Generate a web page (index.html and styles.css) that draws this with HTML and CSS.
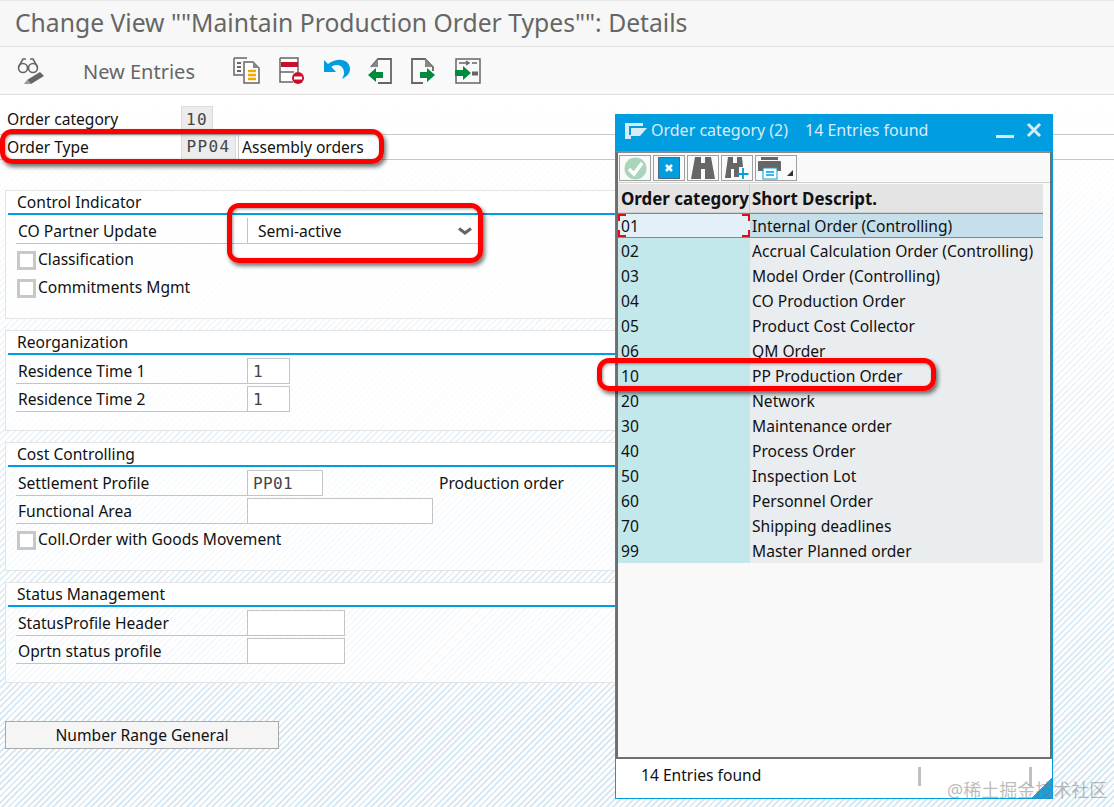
FILE: index.html
```html
<!DOCTYPE html>
<html lang="en">
<head>
<meta charset="utf-8">
<title>Change View</title>
<link rel="stylesheet" href="styles.css">
</head>
<body>
<div class="app">
  <header class="titlebar">Change View ""Maintain Production Order Types"": Details</header>
  <nav class="toolbar">
    <svg class="ic ic-glasses" width="28" height="30" viewBox="0 0 28 30"><g fill="none" stroke="#666" stroke-width="1.600"><circle cx="6" cy="12" r="4.500"/><circle cx="16" cy="12" r="4.500"/><path d="M10.500 11h1M1.500 11L6 3h3M20.500 11L16 3h-3"/></g><path d="M10 24l13-8 4 4-13 8z" fill="#666"/><path d="M7 28l3-4 4 4z" fill="#999"/></svg>
    <span class="tool-text">New Entries</span>
    <svg class="ic ic-copy" width="27" height="27" viewBox="0 0 27 27"><path d="M1 1h13M1 1v17h9" fill="none" stroke="#666" stroke-width="1.500"/><path d="M4 6h4M4 10h4M4 14h4" stroke="#666" stroke-width="2"/><path d="M11 5h9l6 6v15H11z" fill="#fff" stroke="#666" stroke-width="1.500"/><path d="M20 5v6h6" fill="#888"/><path d="M15 14h8M15 18h8M15 22h8" stroke="#f0ab00" stroke-width="2.500"/></svg>
    <svg class="ic ic-del" width="26" height="27" viewBox="0 0 26 27"><path d="M1 1h18v14M1 1v24h13" fill="#fff" stroke="#666" stroke-width="1.500"/><rect x="2" y="5" width="17" height="5" fill="#c8102e"/><path d="M1 15h14" stroke="#666" stroke-width="1.500"/><circle cx="19" cy="21" r="6" fill="#c8102e"/><rect x="15" y="19.500" width="8" height="3" fill="#fff"/></svg>
    <svg class="ic ic-undo" width="27" height="24" viewBox="0 0 27 24"><path d="M1 3v12h12l-4.500-5C13 6 21 8 21 16c0 2-1 4-2 6 4-2 8-5 8-10C27 3 16-1 5 7z" fill="#009de0"/></svg>
    <svg class="ic ic-prev" width="25" height="27" viewBox="0 0 25 27"><path d="M3 10l7-8h13v24H10" fill="none" stroke="#666" stroke-width="1.800"/><path d="M10 2v8H3" fill="#888"/><path d="M0 18l8-7v4h7v6H8v4z" fill="#008a3e"/></svg>
    <svg class="ic ic-next" width="25" height="27" viewBox="0 0 25 27"><path d="M12 26H1V2h13l8 8v4" fill="none" stroke="#666" stroke-width="1.800"/><path d="M14 2v8h8" fill="#888"/><path d="M9 15h7v-4l8 7-8 7v-4H9z" fill="#008a3e"/></svg>
    <svg class="ic ic-last" width="26" height="26" viewBox="0 0 26 26"><path d="M1 1h24v24H1z" fill="none" stroke="#666" stroke-width="1.500"/><path d="M4 5h10M11 3l3 2-3 2M17 5h5M17 16h5" stroke="#666" stroke-width="1.500" fill="none"/><rect x="17" y="13.500" width="6" height="4" fill="#666"/><path d="M0 12h8V8l8 7-8 7v-4H0z" fill="#008a3e"/></svg>
  </nav>
  <main class="content">
    <div class="head-fields">
      <div class="head-row">
        <span class="head-label">Order category</span>
        <span class="ro-field mono w-cat">10</span>
      </div>
      <div class="head-row lined">
        <span class="head-label">Order Type</span>
        <span class="ro-field mono w-type">PP04</span>
        <span class="head-desc">Assembly orders</span>
      </div>
    </div>

    <section class="group g1">
      <h2 class="group-title">Control Indicator</h2>
      <div class="row"><span class="label">CO Partner Update</span><span class="field select">Semi-active<svg class="chev" width="14" height="9" viewBox="0 0 14 9"><path d="M1 1.500l6 4.500 6-4.500" fill="none" stroke="#666" stroke-width="3"/></svg></span></div>
      <div class="row"><span class="check"></span><span class="check-text">Classification</span></div>
      <div class="row"><span class="check"></span><span class="check-text">Commitments Mgmt</span></div>
    </section>

    <section class="group g2">
      <h2 class="group-title">Reorganization</h2>
      <div class="row"><span class="label">Residence Time 1</span><span class="field mono w-43">1</span></div>
      <div class="row"><span class="label">Residence Time 2</span><span class="field mono w-43">1</span></div>
    </section>

    <section class="group g3">
      <h2 class="group-title">Cost Controlling</h2>
      <div class="row"><span class="label">Settlement Profile</span><span class="field mono w-76">PP01</span><span class="after">Production order</span></div>
      <div class="row"><span class="label">Functional Area</span><span class="field w-186"></span></div>
      <div class="row"><span class="check"></span><span class="check-text">Coll.Order with Goods Movement</span></div>
    </section>

    <section class="group g4">
      <h2 class="group-title">Status Management</h2>
      <div class="row"><span class="label">StatusProfile Header</span><span class="field w-98"></span></div>
      <div class="row"><span class="label">Oprtn status profile</span><span class="field w-98"></span></div>
    </section>

    <button class="action">Number Range General</button>
  </main>
</div>

<aside class="dialog">
  <div class="dlg-title">
    <svg class="dlg-icon" width="22" height="16" viewBox="0 0 22 16"><path d="M0 0h18v3H4v9h2V5h16l-7 8H6v3H0z" fill="#d8ecf8"/></svg>
    <span class="dlg-name">Order category (2)</span>
    <span class="dlg-count">14 Entries found</span>
    <svg class="dlg-min" width="18" height="4" viewBox="0 0 18 4"><rect width="18" height="3" y="1" fill="#d8ecf8"/></svg>
    <svg class="dlg-close" width="16" height="16" viewBox="0 0 16 16"><path d="M2 2l12 12M14 2L2 14" stroke="#d8ecf8" stroke-width="3"/></svg>
  </div>
  <div class="dlg-body">
    <div class="dlg-tools">
      <span class="tbtn"><svg width="25" height="25" viewBox="0 0 25 25"><circle cx="12.500" cy="12.500" r="11" fill="#a9d6bb"/><path d="M6 13l5 5 8-11" fill="none" stroke="#fff" stroke-width="3.500"/></svg></span>
      <span class="tbtn"><svg width="22" height="22" viewBox="0 0 22 22"><rect width="21" height="21" x=".5" y=".5" fill="#009de0" stroke="#4d6b80"/><path d="M8 8l6 6M14 8l-6 6" stroke="#fff" stroke-width="2.500"/></svg></span>
      <span class="tbtn"><svg width="24" height="24" viewBox="0 0 24 24"><path d="M4 1h6v6h4V1h6l4 22h-10V13h-4v10H0z" fill="#666"/></svg></span>
      <span class="tbtn"><svg width="25" height="24" viewBox="0 0 25 24"><path d="M3 1h5v6h4V1h5l1 10h-4v10H9V13H6v9H0z" fill="#666"/><path d="M18 12v11M12.500 18h11" stroke="#009de0" stroke-width="1.800"/></svg></span>
      <span class="tbtn wide"><svg width="24" height="24" viewBox="0 0 24 24"><path d="M3 1h17v3H3zM0 6q0-1 1-1h21q1 0 1 1v9H0z" fill="#666"/><rect x="5" y="12" width="14" height="11" fill="#fff" stroke="#009de0" stroke-width="1"/><path d="M8 16h8M8 19h8" stroke="#009de0" stroke-width="1.500"/></svg><svg class="tri" width="6" height="6" viewBox="0 0 6 6"><path d="M6 0v6H0z" fill="#333"/></svg></span>
    </div>
    <table class="grid">
      <thead><tr><th class="c1">Order category</th><th class="c2">Short Descript.</th></tr></thead>
      <tbody>
        <tr class="sel"><td class="c1">01<i class="cn tl"></i><i class="cn tr"></i><i class="cn bl"></i><i class="cn br"></i></td><td class="c2">Internal Order (Controlling)</td></tr>
        <tr><td class="c1">02</td><td class="c2">Accrual Calculation Order (Controlling)</td></tr>
        <tr><td class="c1">03</td><td class="c2">Model Order (Controlling)</td></tr>
        <tr><td class="c1">04</td><td class="c2">CO Production Order</td></tr>
        <tr><td class="c1">05</td><td class="c2">Product Cost Collector</td></tr>
        <tr><td class="c1">06</td><td class="c2">QM Order</td></tr>
        <tr><td class="c1">10</td><td class="c2">PP Production Order</td></tr>
        <tr><td class="c1">20</td><td class="c2">Network</td></tr>
        <tr><td class="c1">30</td><td class="c2">Maintenance order</td></tr>
        <tr><td class="c1">40</td><td class="c2">Process Order</td></tr>
        <tr><td class="c1">50</td><td class="c2">Inspection Lot</td></tr>
        <tr><td class="c1">60</td><td class="c2">Personnel Order</td></tr>
        <tr><td class="c1">70</td><td class="c2">Shipping deadlines</td></tr>
        <tr><td class="c1">99</td><td class="c2">Master Planned order</td></tr>
      </tbody>
    </table>
  </div>
  <footer class="dlg-status">
    <span class="status-text">14 Entries found</span>
    <i class="sep s1"></i><i class="sep s2"></i>
    <i class="grip"></i>
  </footer>
</aside>

<div class="mark m1"></div>
<div class="mark m2"></div>
<div class="mark m3"></div>
<div class="watermark">@稀土掘金技术社区</div>
</body>
</html>
```
FILE: styles.css
```css
* { box-sizing: border-box; }
html, body { margin: 0; padding: 0; }
body {
  width: 1114px;
  height: 807px;
  overflow: hidden;
  position: relative;
  font-family: "Noto Sans", "Open Sans", sans-serif;
  font-size: 15.600px;
  color: #111;
  background: #fff;
}
.app { display: flex; flex-direction: column; height: 807px; }
.titlebar {
  height: 47px;
  padding: 3px 0 0 15px;
  font-size: 24.700px;
  line-height: 38px;
  color: #666;
  background: #f7f7f7;
  border-top: 1px solid #e6e6e6;
  border-bottom: 1px solid #e0e0e0;
}
.toolbar {
  height: 48px;
  display: flex;
  align-items: center;
  background: #f9f9f9;
  border-bottom: 1px solid #e0e0e0;
}
.ic { flex: none; }
.ic-glasses { margin-left: 17px; }
.tool-text { margin-left: 38px; width: 150px; margin-top: 2px; font-size: 20px; color: #666; }
.ic-del { margin-left: 19px; }
.ic-undo { margin-left: 18px; margin-top: -3px; }
.ic-prev { margin-left: 18px; }
.ic-next { margin-left: 18px; }
.ic-last { margin-left: 19px; }

.content {
  flex: 1;
  padding: 11px 0 0 5px;
  background:
    linear-gradient(to bottom, #ffffff 0, rgba(255,255,255,.75) 180px, rgba(255,255,255,0) 640px),
    repeating-linear-gradient(135deg, #d9e9f4 0 2px, #ffffff 2px 4.500px);
}
.head-fields { margin-left: -5px; }
.head-row { display: flex; align-items: stretch; height: 28px; padding-left: 7px; }
.head-row.lined {
  height: 26px;
  background: rgba(255,255,255,.9);
  border-top: 1px solid #c8c8c8;
  border-bottom: 1px solid #c8c8c8;
}
.head-label { width: 174px; line-height: 27px; }
.lined .head-label { line-height: 24px; }
.ro-field {
  background: #ececec;
  border: 1px solid #dcdcdc;
  color: #444;
  text-align: center;
  line-height: 25px;
}
.lined .ro-field { border-width: 0 1px; height: 24px; line-height: 23px; }
.w-cat { width: 32px; }
.w-type { width: 55px; }
.head-desc { margin-left: 2px; padding-left: 3px; line-height: 24px; border-left: 1px solid #c8c8c8; }
.mono { font-family: "DejaVu Sans Mono", monospace; font-size: 16px; font-weight: 400; letter-spacing: 1.400px; color: #444; }

.group {
  width: 640px;
  margin-top: 0;
  padding: 0 0 0 2px;
  background: rgba(255,255,255,.72);
  border: 1px solid #e4e4e4;
  border-right: 0;
}
.head-fields + .g1 { margin-top: 30px; }
.g1 { height: 129px; }
.g2 { height: 101px; margin-top: 11px; }
.g3 { height: 129px; margin-top: 11px; }
.g4 { height: 101px; margin-top: 11px; }
.group-title {
  margin: 0 0 3px;
  height: 24px;
  padding-left: 9px;
  font-size: 15.600px;
  font-weight: 400;
  line-height: 22px;
  background: #fff;
  border-bottom: 2px solid #009de0;
}
.row { display: flex; height: 28px; padding-left: 8px; align-items: flex-start; }
.label {
  width: 231px;
  height: 26px;
  padding-left: 2px;
  line-height: 26px;
  border-bottom: 1px solid #c4c4c4;
}
.field {
  display: block;
  height: 26px;
  padding-left: 5px;
  line-height: 25px;
  background: #fff;
  border: 1px solid #c4c4c4;
}
.select { position: relative; width: 232px; padding-left: 10px; line-height: 26px; border-top: 0; border-right: 0; color: #111; }
.chev { position: absolute; right: 7px; top: 9px; }
.w-43 { width: 43px; }
.w-76 { width: 76px; letter-spacing: .400px; }
.w-186 { width: 186px; }
.w-98 { width: 98px; }
.after { margin-left: 116px; line-height: 26px; }
.check {
  width: 19px;
  height: 19px;
  margin-top: 5px;
  margin-left: 1px;
  background: #fff;
  border: 3px solid #c8c8c8;
}
.check-text { margin-left: 2px; line-height: 26px; }
.action {
  display: block;
  width: 274px;
  height: 28px;
  margin-top: 38px;
  padding: 0;
  font: inherit;
  color: #111;
  background: #f5f5f5;
  border: 1px solid #a8a8a8;
}

.dialog {
  position: absolute;
  left: 615px;
  top: 114px;
  width: 438px;
  height: 685px;
  display: flex;
  flex-direction: column;
  border: 1px solid #009de0;
  background: #fff;
}
.dlg-title {
  height: 36px;
  flex: none;
  display: flex;
  align-items: center;
  padding-left: 9px;
  font-size: 16px;
  color: #d8ecf8;
  background: #009de0;
}
.dlg-icon { margin-top: -5px; }
.dlg-name { margin-left: 4px; margin-top: -7px; width: 139px; white-space: nowrap; }
.dlg-count { margin-left: 15px; margin-top: -7px; }
.dlg-min { margin-left: 68px; margin-top: 6px; }
.dlg-close { margin-left: 12px; margin-top: -6px; }
.dlg-body {
  height: 608px;
  flex: none;
  background: #f9f9f9;
  border: 2px solid #6f6f6f;
  border-top-color: #8a8a8a;
}
.dlg-tools {
  height: 30px;
  display: flex;
  gap: 2px;
  padding: 2px 0 0 1px;
  border-bottom: 1px solid #d0d0d0;
}
.tbtn {
  position: relative;
  width: 32px;
  height: 26px;
  display: flex;
  align-items: center;
  justify-content: center;
  background: #fafafa;
  border: 1px solid #a0a0a0;
}
.tbtn svg { display: block; }
.tbtn.wide { width: 42px; justify-content: flex-start; padding-left: 2px; }
.tri { position: absolute; right: 3px; bottom: 4px; }
.grid { border-collapse: separate; border-spacing: 0; table-layout: fixed; width: 425px; margin-top: 1px; }
.grid th, .grid td { padding: 0 0 0 3px; text-align: left; white-space: nowrap; font-weight: 400; }
.grid .c1 { width: 132px; }
.grid th { height: 29px; font-size: 16.900px; font-weight: 700; background: #e4e4e4; border-bottom: 1px solid #cfcfcf; }
.grid th.c1 { border-right: 1px solid #d0d0d0; padding-left: 3px; overflow: visible; }
.grid th.c2 { padding-left: 2px; }
.grid td { height: 25px; padding-top: 1px; line-height: 24px; }
.grid td.c1 { position: relative; background: #c3e8ec; }
.grid td.c2 { padding-left: 2px; background: #e9edf0; }
.grid .sel td { line-height: 22px; border-top: 1px solid #d9730d; border-bottom: 1px solid #d9730d; }
.grid .sel td.c1 { background: #e4f0f8; }
.grid .sel td.c2 { background: #c5dfeb; }
.cn { position: absolute; width: 8px; height: 7px; border: 0 solid #d9101c; }
.tl { left: 0; top: 0; border-width: 2px 0 0 2px; }
.tr { right: 0; top: 0; border-width: 2px 2px 0 0; }
.bl { left: 0; bottom: 0; border-width: 0 0 2px 2px; }
.br { right: 0; bottom: 0; border-width: 0 2px 2px 0; }
.dlg-status { position: relative; flex: 1; padding-left: 25px; line-height: 33px; }
.sep { position: absolute; top: 8px; width: 3px; height: 19px; background: #c0c0c0; }
.s1 { left: 302px; }
.s2 { left: 413px; }
.grip {
  position: absolute;
  right: 0;
  bottom: 0;
  width: 20px;
  height: 20px;
  background: linear-gradient(135deg, transparent 50%, #1a9fe0 50%);
}
.mark {
  position: absolute;
  border: 5px solid #f00;
  border-radius: 12px;
  box-shadow: 2px 3px 4px rgba(0,0,0,.55), inset 1px 1px 3px rgba(0,0,0,.4);
}
.m1 { left: 0; top: 129px; width: 384px; height: 35px; }
.m2 { left: 227px; top: 203px; width: 256px; height: 60px; }
.m3 { left: 597px; top: 358px; width: 339px; height: 33px; }
.watermark {
  position: absolute;
  left: 947px;
  bottom: 5px;
  font-family: "Noto Sans", "Noto Sans CJK SC", sans-serif;
  font-size: 18px;
  line-height: 24px;
  white-space: nowrap;
  color: rgba(120,120,120,.5);
}
```
